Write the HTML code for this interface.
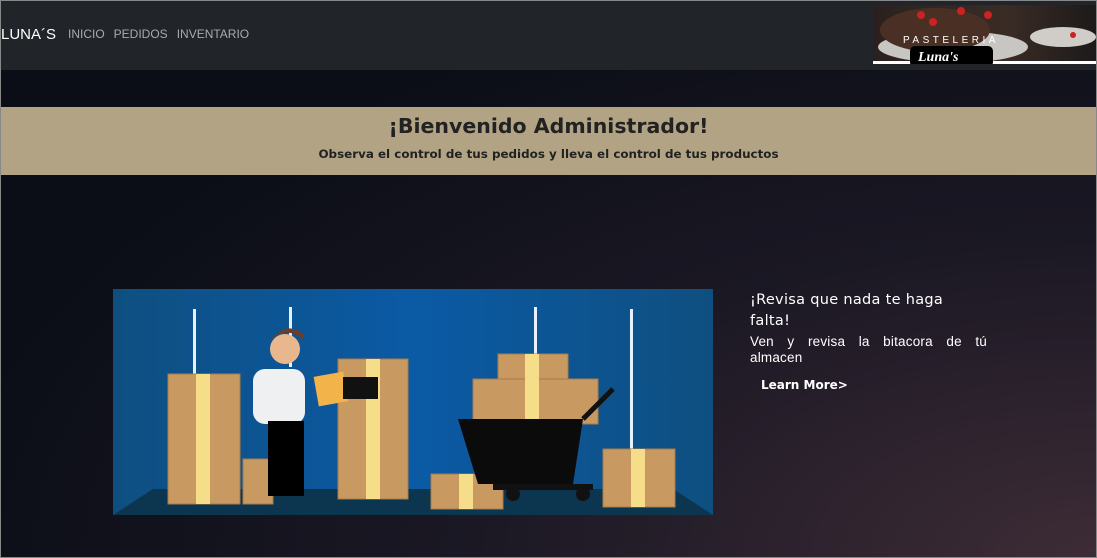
<!DOCTYPE html>
<html><head><meta charset="utf-8"><style>
*{margin:0;padding:0;box-sizing:border-box}
body{width:1097px;height:558px;overflow:hidden;font-family:"DejaVu Sans","Liberation Sans",sans-serif;background:#888;}
.page{position:absolute;left:1px;top:1px;width:1095px;height:556px;background:radial-gradient(ellipse at 100% 100%,#3d2c36 0%,#1b1824 40%,#0b0e17 75%);}
.nav{position:absolute;left:0;top:0;width:1095px;height:69px;background:#212529;}
.brand{position:absolute;left:0;top:25px;color:#fff;font-size:15px;font-family:"Liberation Sans",sans-serif;}
.links{position:absolute;left:67px;top:26px;color:#a8aaad;font-size:12px;font-family:"Liberation Sans",sans-serif;}
.links span{margin-right:9px}
.logo{position:absolute;left:872px;top:4px;width:223px;height:59px;background:#fff}
.banner{position:absolute;left:0;top:106px;width:1095px;height:68px;background:#b1a383;text-align:center;color:#222;}
.banner h1{font-size:20.5px;font-weight:bold;padding-top:6px;line-height:26px}
.banner p{font-size:11.9px;font-weight:bold;margin-top:8px}
.txt{position:absolute;left:749px;top:289px;width:237px;color:#fff}
.txt h3{font-size:14.5px;font-weight:normal;line-height:21px;letter-spacing:.3px}
.txt p{font-size:13.5px;line-height:16px;font-family:"Liberation Sans",sans-serif;margin-top:2px;letter-spacing:.2px}
.txt p span{display:block;text-align:justify;text-align-last:justify}
.txt a{display:block;font-size:12px;font-weight:bold;margin:12px 0 0 11px}
</style></head><body><div class="page">
<div class="nav"><div class="brand">LUNA´S</div><div class="links"><span>INICIO</span><span>PEDIDOS</span><span>INVENTARIO</span></div>
<div class="logo"><svg width="223" height="59"><defs><linearGradient id="c" x1="0" x2="1"><stop offset="0" stop-color="#2a211e"/><stop offset=".6" stop-color="#3a2b25"/><stop offset="1" stop-color="#1d1a1a"/></linearGradient></defs>
<rect width="223" height="56" fill="url(#c)"/><ellipse cx="80" cy="42" rx="75" ry="16" fill="#c8c6c2"/><ellipse cx="62" cy="25" rx="55" ry="22" fill="#4a3024"/><ellipse cx="190" cy="32" rx="33" ry="10" fill="#d0cdc8"/>
<circle cx="48" cy="10" r="4" fill="#c22"/><circle cx="88" cy="6" r="4" fill="#c22"/><circle cx="115" cy="10" r="4" fill="#c22"/><circle cx="60" cy="17" r="4" fill="#c22"/><circle cx="200" cy="30" r="3" fill="#c22"/>
<text x="30" y="38" fill="#fff" font-size="10" letter-spacing="3.5" font-family="Liberation Sans">PASTELERIA</text>
<rect x="37" y="41" width="83" height="21" rx="5" fill="#000"/><text x="45" y="56" fill="#fff" font-size="14" font-style="italic" font-family="Liberation Serif" font-weight="bold">Luna's</text></svg></div></div>
<div class="banner"><h1>¡Bienvenido Administrador!</h1><p>Observa el control de tus pedidos y lleva el control de tus productos</p></div>
<svg style="position:absolute;left:112px;top:288px" width="600" height="226"><defs><linearGradient id="b" x1="0" x2="1"><stop offset="0" stop-color="#0e4f80"/><stop offset=".5" stop-color="#0b5aa5"/><stop offset="1" stop-color="#0e4f80"/></linearGradient></defs>
<rect width="600" height="226" fill="url(#b)"/><polygon points="0,226 40,200 560,200 600,226" fill="#0c3550"/>
<g fill="#e8f0ff"><rect x="80" y="20" width="3" height="80"/><rect x="176" y="18" width="3" height="60"/><rect x="421" y="18" width="3" height="60"/><rect x="517" y="20" width="3" height="140"/></g>
<g fill="#c89a62" stroke="#a77a48" stroke-width="1">
<rect x="55" y="85" width="72" height="130"/><rect x="225" y="70" width="70" height="140"/><rect x="385" y="65" width="70" height="30"/><rect x="360" y="90" width="125" height="45"/><rect x="490" y="160" width="72" height="58"/><rect x="318" y="185" width="72" height="35"/><rect x="130" y="170" width="30" height="45"/></g>
<g fill="#f5dd8a"><rect x="83" y="85" width="14" height="130"/><rect x="253" y="70" width="14" height="140"/><rect x="412" y="65" width="14" height="70"/><rect x="518" y="160" width="14" height="58"/><rect x="346" y="185" width="14" height="35"/></g>
<polygon points="345,130 470,130 460,195 365,195" fill="#0b0b0b"/><line x1="470" y1="130" x2="500" y2="100" stroke="#111" stroke-width="5"/><rect x="380" y="195" width="100" height="6" fill="#111"/><circle cx="400" cy="205" r="7" fill="#111"/><circle cx="470" cy="205" r="7" fill="#111"/>
<rect x="140" y="80" width="52" height="55" rx="12" fill="#eef0f2"/><rect x="155" y="132" width="36" height="75" fill="#000"/><circle cx="172" cy="60" r="15" fill="#e9b78e"/><path d="M155 55 q15 -20 35 -5 v-5 q-18 -15 -35 10z" fill="#6b3d2a"/><rect x="203" y="85" width="30" height="30" fill="#f2b34a" transform="rotate(-10 218 100)"/><rect x="230" y="88" width="35" height="22" fill="#111"/>
</svg>
<div class="txt"><h3>¡Revisa que nada te haga<br>falta!</h3><p><span>Ven y revisa la bitacora de tú</span>almacen</p><a>Learn More&gt;</a></div>
</div></body></html>
